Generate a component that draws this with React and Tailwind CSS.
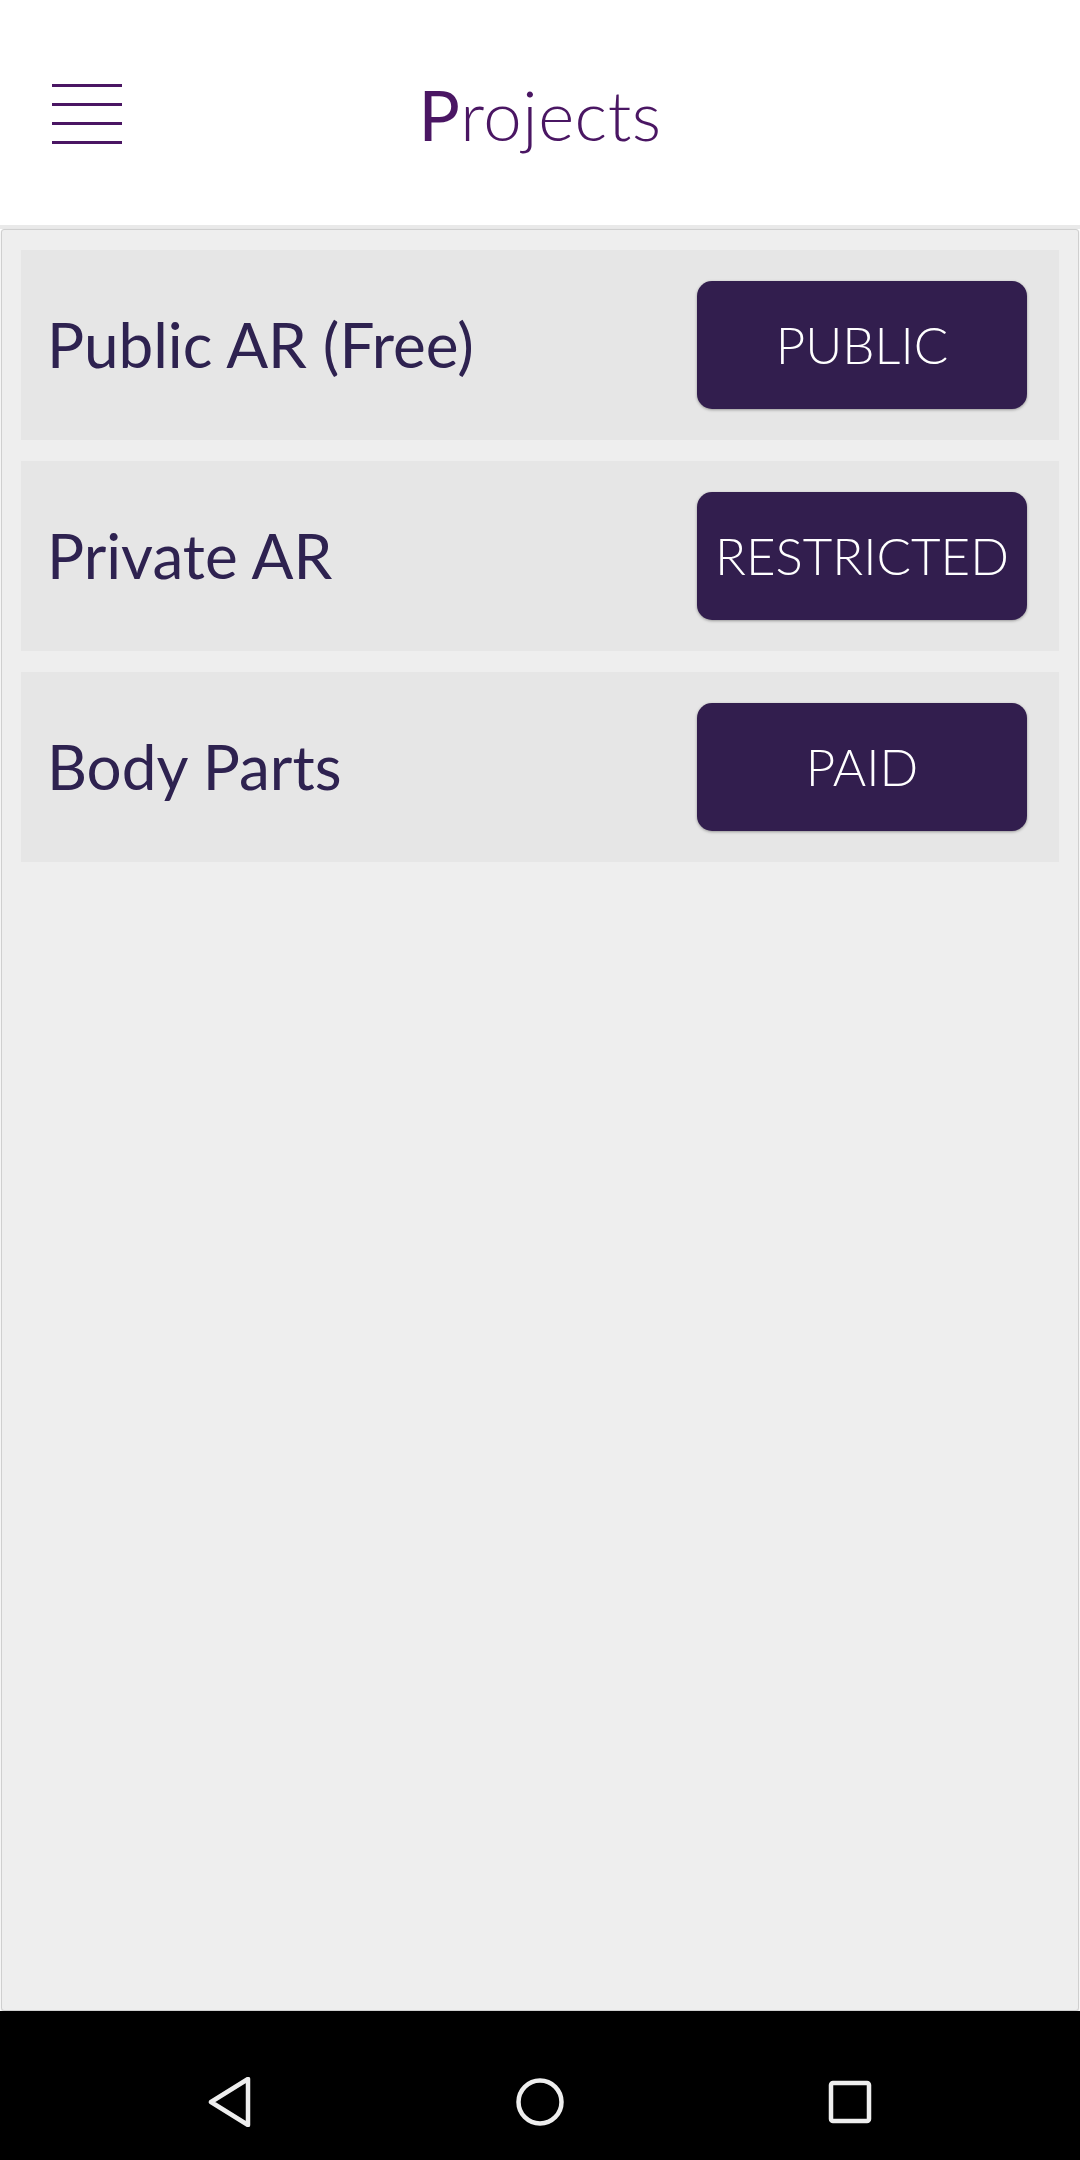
import React from 'react';

const projects = [
  { name: 'Public AR (Free)', access: 'PUBLIC' },
  { name: 'Private AR', access: 'RESTRICTED' },
  { name: 'Body Parts', access: 'PAID' },
];

function Hamburger() {
  return (
    <div className="w-[70px] flex flex-col gap-[16px] pt-[2px]">
      <span className="block h-[3px] bg-[#4a1663]" />
      <span className="block h-[3px] bg-[#4a1663]" />
      <span className="block h-[3px] bg-[#4a1663]" />
      <span className="block h-[3px] bg-[#4a1663]" />
    </div>
  );
}

export default function App() {
  return (
    <div className="h-[2160px] w-[1080px] flex flex-col bg-white font-['Lato','Liberation_Sans',sans-serif]">
      {/* top bar */}
      <header className="h-[229px] shrink-0 flex items-center px-[52px] border-b-4 border-[#e9e9e9]">
        <Hamburger />
        <h1 className="flex-1 text-center text-[69px] leading-none text-[#4a1663] font-light tracking-[0.5px] mt-[4px]">
          <span className="font-normal">P</span>rojects
        </h1>
        <div className="w-[70px]" />
      </header>

      {/* list */}
      <main className="flex-1 mx-[1px] border border-[#cfcfcf] rounded-[3px] bg-[#eeeeee] px-[19px] py-[20px] flex flex-col gap-[21px] shadow-[0_1px_2px_rgba(0,0,0,0.15)]">
        {projects.map((p) => (
          <div key={p.name} className="h-[190px] bg-[#e6e6e6] flex items-center justify-between pl-[26px] pr-[32px]">
            <span className="text-[62px] text-[#2e2250] -mt-[2px]">{p.name}</span>
            <button className="w-[330px] h-[128px] rounded-[15px] bg-[#321e4e] text-white text-[51px] font-light shadow-[0_1px_3px_rgba(0,0,0,0.35)]">
              {p.access}
            </button>
          </div>
        ))}
      </main>

      {/* android nav bar */}
      <nav className="h-[149px] shrink-0 bg-black flex items-center justify-between px-[205px] pt-[32px]">
        <svg width="50" height="50" viewBox="0 0 50 50">
          <path d="M43 2 L43 48 L6 25 Z" fill="none" stroke="#eeeeee" strokeWidth="4.5" strokeLinejoin="round" />
        </svg>
        <svg width="50" height="50" viewBox="0 0 50 50">
          <circle cx="25" cy="25" r="21.5" fill="none" stroke="#eeeeee" strokeWidth="4.5" />
        </svg>
        <svg width="50" height="50" viewBox="0 0 50 50">
          <rect x="6" y="6" width="38" height="38" rx="2" fill="none" stroke="#eeeeee" strokeWidth="4.5" />
        </svg>
      </nav>
    </div>
  );
}
